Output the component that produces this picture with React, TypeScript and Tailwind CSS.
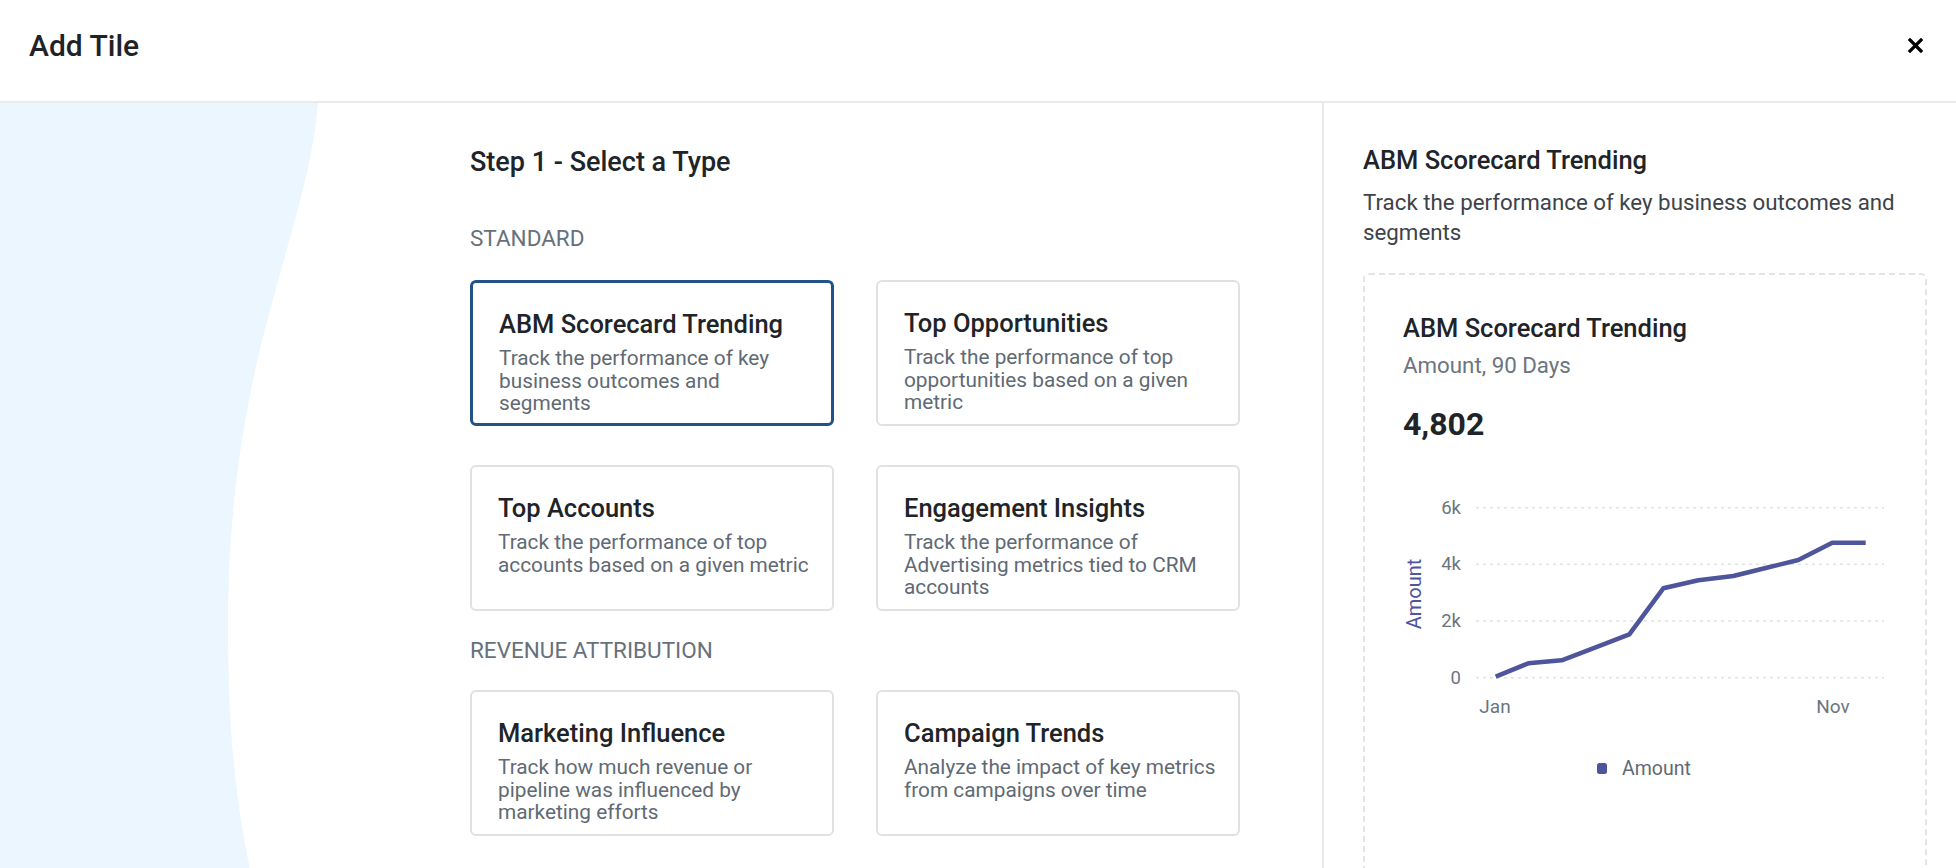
import React from "react";

const FONT = { fontFamily: "Roboto, 'Noto Sans', Arial, sans-serif" };

type Tile = { title: string; lines: string[]; selected?: boolean };

function TileCard({ tile }: { tile: Tile }) {
  return (
    <div
      className={
        tile.selected
          ? "w-[364px] h-[146px] rounded-[6px] border-[3px] border-[#21538a] bg-white px-[26px] pt-[26px]"
          : "w-[364px] h-[146px] rounded-[6px] border-2 border-[#dfe2e5] bg-white px-[26px] pt-[26px]"
      }
    >
      <div className="text-[25.5px] leading-[30px] font-medium text-[#202428] whitespace-nowrap">{tile.title}</div>
      <div className="mt-[8px] text-[20.8px] leading-[22.5px] text-[#5f6a74]">
        {tile.lines.map((l) => (
          <div key={l} className="whitespace-nowrap">
            {l}
          </div>
        ))}
      </div>
    </div>
  );
}

function Chart() {
  const xs = [92.7, 125.3, 158.7, 192, 226.3, 260.3, 295.3, 330.3, 363.7, 395.3, 429.3, 462.7];
  const ys = [195.7, 182.3, 179.3, 166.7, 153.3, 107.3, 99.3, 95, 86.7, 79, 61.7, 61.7];
  const pts = xs.map((x, i) => `${x},${ys[i]}`).join(" ");
  const grid = [
    { y: 26.7, l: "6k" },
    { y: 83.3, l: "4k" },
    { y: 140, l: "2k" },
    { y: 196.7, l: "0" },
  ];
  return (
    <div className="flex">
      <div className="w-[22px] h-[226px] flex items-center justify-center">
        <div className="-rotate-90 whitespace-nowrap text-[20px] leading-[22px] text-[#4f559b]">Amount</div>
      </div>
      <svg width="500" height="310" viewBox="22 0 500 310" className="block overflow-visible">
        {grid.map((g) => (
          <g key={g.l}>
            <line x1="73" x2="481" y1={g.y} y2={g.y} stroke="#dfe2e5" strokeWidth="1.5" strokeDasharray="3 4" />
            <text x="58" y={g.y} textAnchor="end" dominantBaseline="central" fontSize="18.5" fill="#6b7580" style={FONT}>
              {g.l}
            </text>
          </g>
        ))}
        <polyline points={pts} fill="none" stroke="#4f559b" strokeWidth="4.5" strokeLinejoin="round" />
        <text x="92" y="225" textAnchor="middle" dominantBaseline="central" fontSize="19" fill="#6b7580" style={FONT}>
          Jan
        </text>
        <text x="430" y="225" textAnchor="middle" dominantBaseline="central" fontSize="19" fill="#6b7580" style={FONT}>
          Nov
        </text>
        <rect x="194" y="282" width="10" height="11" rx="2.5" fill="#4f559b" />
        <text x="219" y="287.5" dominantBaseline="central" fontSize="19.5" fill="#5f6a74" style={FONT}>
          Amount
        </text>
      </svg>
    </div>
  );
}

export default function App() {
  const standard: Tile[] = [
    { title: "ABM Scorecard Trending", lines: ["Track the performance of key", "business outcomes and", "segments"], selected: true },
    { title: "Top Opportunities", lines: ["Track the performance of top", "opportunities based on a given", "metric"] },
    { title: "Top Accounts", lines: ["Track the performance of top", "accounts based on a given metric"] },
    { title: "Engagement Insights", lines: ["Track the performance of", "Advertising metrics tied to CRM", "accounts"] },
  ];
  const revenue: Tile[] = [
    { title: "Marketing Influence", lines: ["Track how much revenue or", "pipeline was influenced by", "marketing efforts"] },
    { title: "Campaign Trends", lines: ["Analyze the impact of key metrics", "from campaigns over time"] },
  ];

  return (
    <div className="w-[1956px] h-[868px] overflow-hidden bg-white flex flex-col" style={FONT}>
      <div className="h-[103px] shrink-0 flex items-center justify-between pl-[29px] pr-[33px] pb-[10px] border-b-2 border-[#e8eaec]">
        <div className="text-[30px] font-medium text-[#1f2327]">Add Tile</div>
        <svg width="15" height="15" viewBox="0 0 15 15">
          <path d="M2 2L13 13M13 2L2 13" stroke="#000" strokeWidth="3.2" strokeLinecap="square" />
        </svg>
      </div>
      <div className="flex-1 flex min-h-0">
        <div className="relative w-[1322px] shrink-0">
          <svg className="absolute left-0 top-0" width="330" height="766" viewBox="0 0 330 766">
            <path
              d="M0 0 L318 0 C312 70 290 130 268 215 C245 300 228 400 228 520 C228 640 238 710 250 766 L0 766 Z"
              fill="#ebf6fe"
            />
          </svg>
          <div className="relative pl-[470px] pt-[44px]">
            <div className="text-[27px] leading-[30px] font-medium text-[#202428]">Step 1 - Select a Type</div>
            <div className="mt-[49px] text-[22.5px] leading-[24px] text-[#66717c] uppercase">Standard</div>
            <div className="mt-[30px] grid grid-cols-[364px_364px] gap-x-[42px] gap-y-[39px]">
              {standard.map((t) => (
                <TileCard key={t.title} tile={t} />
              ))}
            </div>
            <div className="mt-[27px] text-[22.5px] leading-[24px] text-[#66717c] uppercase">Revenue Attribution</div>
            <div className="mt-[28px] grid grid-cols-[364px_364px] gap-x-[42px]">
              {revenue.map((t) => (
                <TileCard key={t.title} tile={t} />
              ))}
            </div>
          </div>
        </div>
        <div className="flex-1 border-l-2 border-[#e8eaec] pl-[39px] pr-[30px] pt-[42px]">
          <div className="text-[25.5px] leading-[30px] font-medium text-[#202428]">ABM Scorecard Trending</div>
          <div className="mt-[12px] text-[22.3px] leading-[30px] text-[#3d4349]">
            <div className="whitespace-nowrap">Track the performance of key business outcomes and</div>
            <div>segments</div>
          </div>
          <div className="mt-[26px] h-[600px] rounded-[6px] border-2 border-dashed border-[#e2e5e8] pl-[38px] pt-[38px]">
            <div className="text-[25.5px] leading-[30px] font-medium text-[#202428]">ABM Scorecard Trending</div>
            <div className="mt-[10px] text-[22.3px] leading-[24px] text-[#6b7580]">Amount, 90 Days</div>
            <div className="mt-[29px] text-[32px] leading-[36px] font-bold text-[#202428]">4,802</div>
            <div className="mt-[39px]">
              <Chart />
            </div>
          </div>
        </div>
      </div>
    </div>
  );
}
